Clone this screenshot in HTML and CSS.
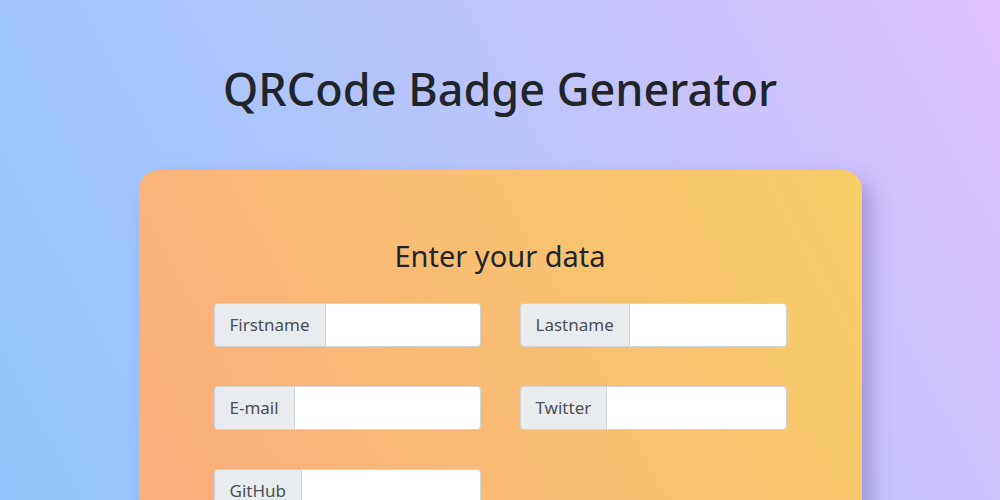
FILE: index.html
```html
<!DOCTYPE html>
<html lang="en">
<head>
<meta charset="utf-8">
<title>QRCode Badge Generator</title>
<link rel="stylesheet" href="styles.css">
</head>
<body>
<main class="page">
  <h1 class="title">QRCode Badge Generator</h1>
  <section class="card">
    <h3 class="card-title">Enter your data</h3>
    <form class="grid">
      <div class="group"><span class="label">Firstname</span><input class="field" type="text"></div>
      <div class="group"><span class="label">Lastname</span><input class="field" type="text"></div>
      <div class="group"><span class="label">E-mail</span><input class="field" type="text"></div>
      <div class="group"><span class="label">Twitter</span><input class="field" type="text"></div>
      <div class="group"><span class="label">GitHub</span><input class="field" type="text"></div>
    </form>
  </section>
</main>
</body>
</html>
```

FILE: styles.css
```css
html, body {
  margin: 0;
  padding: 0;
  height: 100%;
  overflow: hidden;
}
body {
  background: linear-gradient(62deg, #8ec5fc 0%, #e0c3fc 100%);
  font-family: "Noto Sans", "Open Sans", sans-serif;
  color: #212529;
}
.page {
  display: flex;
  flex-direction: column;
  align-items: center;
  padding-top: 62px;
}
.title {
  margin: 0;
  font-size: 45px;
  font-weight: 500;
  line-height: 1.2;
  color: #212529;
}
.card {
  margin-top: 54px;
  width: 723px;
  box-sizing: border-box;
  padding: 69px 75px 60px;
  border-radius: 20px;
  background: linear-gradient(62deg, #fbab7e 0%, #f7ce68 100%);
  box-shadow: 10px 10px 20px rgba(90, 70, 150, 0.35);
  height: 400px;
}
.card-title {
  margin: 0 0 29px;
  text-align: center;
  font-size: 29px;
  font-weight: 400;
  line-height: 1.2;
  color: #212529;
}
.grid {
  display: grid;
  grid-template-columns: 267px 267px;
  column-gap: 39px;
  row-gap: 39px;
}
.group {
  display: flex;
  height: 44px;
}
.label {
  display: flex;
  align-items: center;
  padding: 0 15px;
  background: #e9ecef;
  border: 1px solid #ced4da;
  border-radius: 4px 0 0 4px;
  font-size: 17px;
  color: #495057;
}
.field {
  flex: 1;
  min-width: 0;
  margin: 0 0 0 -1px;
  border: 1px solid #ced4da;
  border-radius: 0 4px 4px 0;
  background: #fff;
  padding: 0 12px;
  font: inherit;
}
```
